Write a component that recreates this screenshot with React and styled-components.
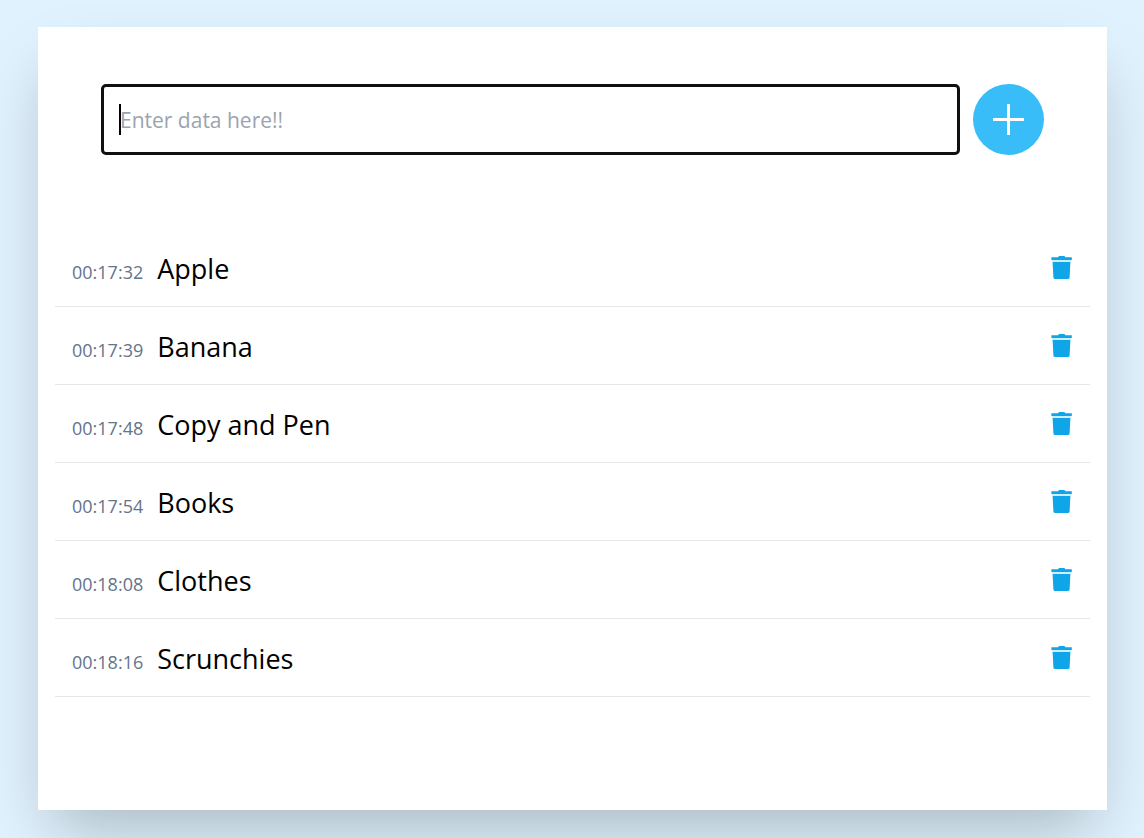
import React, { useState } from "react";
import styled, { createGlobalStyle } from "styled-components";

const GlobalStyle = createGlobalStyle`
  *, *::before, *::after { box-sizing: border-box; }
  body {
    margin: 0;
    background: #e0f2fe;
    font-family: "Open Sans", "Noto Sans", sans-serif;
  }
`;

const Page = styled.div`
  display: flex;
  min-height: 100vh;
  padding: 27px 37px 28px 38px;
  overflow: hidden;
`;

const Card = styled.main`
  flex: 1;
  min-width: 0;
  padding: 57px 17px;
  background: #fff;
  box-shadow: 0 31px 62px -15px rgba(0, 0, 0, 0.25);
`;

const EntryForm = styled.form`
  display: flex;
  align-items: center;
  gap: 13px;
  padding: 0 46px;
  margin-bottom: 74px;
`;

const Field = styled.div`
  position: relative;
  flex: 1;
  min-width: 0;
`;

const TextBox = styled.input`
  display: block;
  width: 100%;
  height: 71px;
  padding: 0 16px;
  border: 3px solid #101010;
  border-radius: 5px;
  outline: none;
  background: #fff;
  color: #000;
  caret-color: transparent;
  font: 400 21px "Open Sans", "Noto Sans", sans-serif;

  &::placeholder {
    color: #9ca3af;
    opacity: 1;
  }
`;

const Caret = styled.span`
  position: absolute;
  top: 20px;
  left: 18px;
  width: 2px;
  height: 31px;
  background: #000;
  pointer-events: none;
`;

const AddButton = styled.button`
  display: grid;
  place-items: center;
  flex: none;
  width: 71px;
  height: 71px;
  padding: 0;
  border: 0;
  border-radius: 50%;
  background: #38bdf8;
  color: #fff;
  cursor: pointer;
`;

const List = styled.ul`
  margin: 0;
  padding: 0;
  list-style: none;
`;

const Row = styled.li`
  display: flex;
  align-items: center;
  justify-content: space-between;
  height: 78px;
  padding: 0 17px;
  border-bottom: 1px solid #e5e7eb;
`;

const Entry = styled.div`
  display: flex;
  align-items: baseline;
  gap: 14px;
  padding-top: 6px;
  line-height: 36px;
`;

const Time = styled.time`
  color: #64748b;
  font-size: 18px;
`;

const Name = styled.span`
  color: #000;
  font-size: 27px;
`;

const DeleteButton = styled.button`
  display: grid;
  padding: 0;
  border: 0;
  background: none;
  color: #0ea5e9;
  cursor: pointer;
`;

const PlusIcon = () => (
  <svg width="31" height="31" viewBox="0 0 31 31" fill="currentColor" aria-hidden="true">
    <path d="M14 0h3v14h14v3H17v14h-3V17H0v-3h14z" />
  </svg>
);

const TrashIcon = () => (
  <svg width="22" height="24" viewBox="0 0 22 24" fill="currentColor" aria-hidden="true">
    <path d="M7 1.2 8 .1h5.4l1 1.1h6.4V4H.4V1.2z" />
    <path d="M1 4h19.4v2H1z" opacity=".2" />
    <path d="M1.6 6h17.8l-.8 15.4a1.8 1.8 0 0 1-1.8 1.6H4.2a1.8 1.8 0 0 1-1.8-1.6z" />
  </svg>
);

const initialItems = [
  { time: "00:17:32", name: "Apple" },
  { time: "00:17:39", name: "Banana" },
  { time: "00:17:48", name: "Copy and Pen" },
  { time: "00:17:54", name: "Books" },
  { time: "00:18:08", name: "Clothes" },
  { time: "00:18:16", name: "Scrunchies" },
];

export default function App() {
  const [items, setItems] = useState(initialItems);
  const [text, setText] = useState("");

  const addItem = (event) => {
    event.preventDefault();
    if (!text.trim()) return;
    const time = new Date().toTimeString().slice(0, 8);
    setItems([...items, { time, name: text.trim() }]);
    setText("");
  };

  return (
    <>
      <GlobalStyle />
      <Page>
        <Card>
          <EntryForm onSubmit={addItem}>
            <Field>
              <TextBox
                aria-label="New item"
                placeholder="Enter data here!!"
                value={text}
                onChange={(event) => setText(event.target.value)}
                autoFocus
              />
              {text === "" && <Caret />}
            </Field>
            <AddButton type="submit" aria-label="Add item">
              <PlusIcon />
            </AddButton>
          </EntryForm>
          <List>
            {items.map((item, index) => (
              <Row key={item.time + item.name}>
                <Entry>
                  <Time>{item.time}</Time>
                  <Name>{item.name}</Name>
                </Entry>
                <DeleteButton
                  type="button"
                  aria-label={`Delete ${item.name}`}
                  onClick={() => setItems(items.filter((_, i) => i !== index))}
                >
                  <TrashIcon />
                </DeleteButton>
              </Row>
            ))}
          </List>
        </Card>
      </Page>
    </>
  );
}
